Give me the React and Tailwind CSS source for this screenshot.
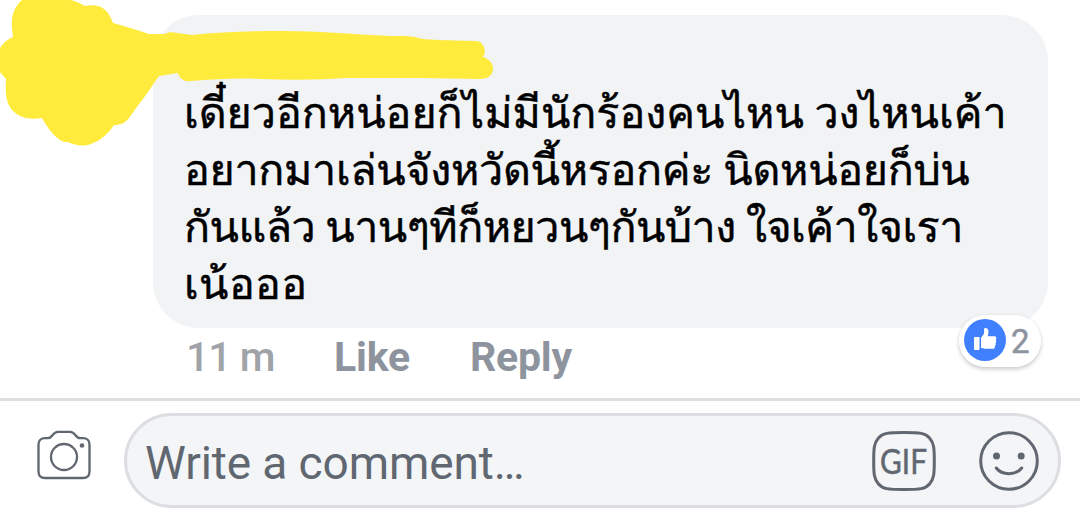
import React from 'react';

const lines = [
  { text: 'เดี๋ยวอีกหน่อยก็ไม่มีนักร้องคนไหน วงไหนเค้า', spacing: 'tracking-[0px]' },
  { text: 'อยากมาเล่นจังหวัดนี้หรอกค่ะ นิดหน่อยก็บ่น', spacing: 'tracking-[-0.3px]' },
  { text: 'กันแล้ว นานๆทีก็หยวนๆกันบ้าง ใจเค้าใจเรา', spacing: 'tracking-[-0.5px]' },
  { text: 'เน้อออ', spacing: 'tracking-[0.4px]' },
];

// Marker strokes hiding the avatar and the name
function Scribble() {
  return (
    <svg className="absolute left-0 top-0" width="500" height="150" viewBox="0 0 500 150" fill="#ffeb3b">
      <path d="M22 0C14 7 11 16 12 28L13 37C6 40 2 44 -1 50V71L6 79C5 93 6 104 13 111C20 118 30 120 42 118C48 129 56 139 64 142L68 142C76 146 85 147 93 143C101 140 108 134 114 125C121 125 125 123 129 118C138 105 148 93 154 83L159 76L178 73C180 79 184 82 191 81C214 79 240 78 260 79C290 80 320 80 345 78L420 78L480 79C488 79 493 75 493 69C493 63 489 59 483 57C487 51 484 41 475 41L455 40.500C440 40 427 40 418 38C413 36 405 36 390 36C350 34 315 31 284 31C250 31 220 32 192 35L177 33C172 32 168 32 165 34L149 34C137 30 125 26 113 23C110 15 106 8 98 6C94 5 89 5 85 6C80 3 75 1 71 0Z" />
    </svg>
  );
}

function ThumbIcon() {
  return (
    <svg width="42" height="42" viewBox="0 0 42 42">
      <circle cx="21" cy="21" r="21" fill="#4080ff" />
      <rect x="10" y="18" width="5.500" height="13" rx="0.800" fill="#fff" />
      <path d="M17 19L19.500 15.500C20.500 14 20 12 20 10.500C20 8 24.500 8.500 24.500 12.500C24.500 14.500 24 16 23.800 17.300H30C32.500 17.300 33 19.500 31.700 20.700C32.500 21.500 32.300 23 31.500 24C32.200 25 31.800 26.200 30.900 26.900C31.200 28.700 30.300 29.800 28.700 29.800H21C19 29.800 18.500 29 17 28.800Z" fill="#fff" />
    </svg>
  );
}

function CameraIcon() {
  return (
    <svg width="54" height="50" viewBox="0 0 54 50" fill="none" stroke="#606770" strokeWidth="2.300">
      <path d="M8 8.200H11C16 8.200 15 1.800 21 1.800H33C39 1.800 38 8.200 43 8.200H46C50 8.200 52.500 10.700 52.500 14.500V41.500C52.500 45.500 50 48 46 48H8C4 48 1.500 45.500 1.500 41.500V14.500C1.500 10.700 4 8.200 8 8.200Z" />
      <circle cx="27" cy="27" r="13" />
      <circle cx="45" cy="15.500" r="2.300" fill="#606770" stroke="none" />
    </svg>
  );
}

function GifIcon() {
  return (
    <svg width="64" height="60" viewBox="0 0 64 60">
      <path d="M32 1.500C48 1.500 53.500 2 57.500 7C62 12 62.300 17 62.300 30C62.300 43 62 48 57.500 53C53.500 58 48 58.500 32 58.500C16 58.500 10.500 58 6.500 53C2 48 1.700 43 1.700 30C1.700 17 2 12 6.500 7C10.500 2 16 1.500 32 1.500Z" fill="none" stroke="#606770" strokeWidth="3" />
      <text x="8" y="43" textLength="47" lengthAdjust="spacingAndGlyphs" fontFamily="Lato, sans-serif" fontSize="35" fill="#606770" stroke="#606770" strokeWidth="0.500">GIF</text>
    </svg>
  );
}

function SmileIcon() {
  return (
    <svg width="60" height="60" viewBox="0 0 60 60" fill="none" stroke="#606770" strokeWidth="3" strokeLinecap="round">
      <circle cx="30" cy="30" r="28.300" />
      <circle cx="17.500" cy="25" r="3.500" fill="#606770" stroke="none" />
      <circle cx="42.200" cy="25" r="3.500" fill="#606770" stroke="none" />
      <path d="M17.300 37C23 44.500 37 44.500 42.700 37" />
    </svg>
  );
}

export default function App() {
  return (
    <div className="relative h-[522px] w-[1080px] overflow-hidden bg-white pt-[15px] font-['Roboto',sans-serif]">
      <div className="relative ml-[153px] h-[313px] w-[895px] rounded-[46px] bg-[#f1f3f5] pl-[31px] pt-[70px]">
        <div className="font-['Roboto','Loma'] text-[43px] leading-[57px] text-black [-webkit-text-stroke:0.5px_black]">
          {lines.map((line) => (
            <div key={line.text} className="h-[57px] whitespace-nowrap">
              <span className={line.spacing}>{line.text}</span>
            </div>
          ))}
        </div>
        <div className="absolute left-[806px] top-[300px] flex h-[52px] w-[82px] items-center rounded-full bg-white pb-[2px] pl-[5px] shadow-[0_2px_4px_rgba(0,0,0,0.22)]">
          <ThumbIcon />
          <span className="ml-[5px] mt-[3px] text-[33px] leading-none text-[#8d949e] [-webkit-text-stroke:0.5px_#8d949e]">2</span>
        </div>
      </div>

      <div className="flex h-[70px] pl-[186px] pt-[4px] text-[41px] leading-[50px] text-[#8d949e]">
        <span className="w-[148px] font-medium tracking-[-1px] text-[#a0a3a8]">11 m</span>
        <span className="w-[136px] font-bold tracking-[-0.2px]">Like</span>
        <span className="font-bold tracking-[-0.2px]">Reply</span>
      </div>

      <div className="flex h-[124px] items-start border-t-[3px] border-[#dddfe3] pl-[37px] pt-3">
        <div className="mt-[17px] w-[87px]">
          <CameraIcon />
        </div>
        <div className="flex h-[95px] w-[937px] items-center rounded-full border-[3px] border-[#dcdee2] bg-[#f4f5f7] pl-[18px] pr-[19px]">
          <span className="mt-1 flex-1 whitespace-nowrap text-[46px] leading-none tracking-[-0.1px] text-[#606770]">Write a comment…</span>
          <GifIcon />
          <div className="ml-[43px]">
            <SmileIcon />
          </div>
        </div>
      </div>
      <Scribble />
    </div>
  );
}
